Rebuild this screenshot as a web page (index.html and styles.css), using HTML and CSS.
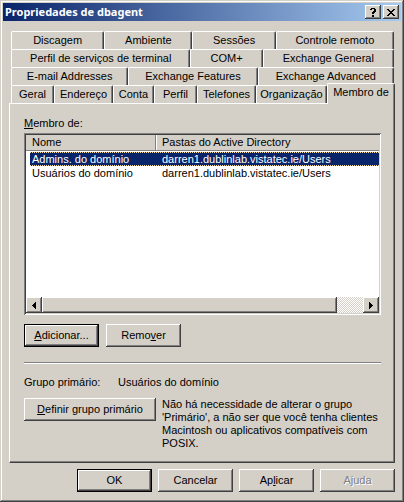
FILE: index.html
```html
<!DOCTYPE html>
<html lang="pt">
  <head>
    <meta charset="UTF-8" />
    <meta name="viewport" content="width=device-width, initial-scale=1.0" />
    <title>Propriedades de dbagent</title>
    <link rel="stylesheet" href="styles.css">
  </head>
  <body>
    <div class="window">
      <div class="title-bar">
        <h1>Propriedades de dbagent</h1>
        <button type="button" class="title-button" aria-label="Ajuda">
          <svg width="8" height="9" viewBox="0 0 8 9" shape-rendering="crispEdges">
            <path d="M2 0h4v1h1v3h-1v1h-1v1h-2v-2h1v-1h1v-2h-2v1h-2v-1h1zM3 7h2v2h-2z" />
          </svg>
        </button>
        <button type="button" class="title-button close" aria-label="Fechar">
          <svg width="8" height="7" viewBox="0 0 8 7" shape-rendering="crispEdges">
            <path d="M0 0h2v1h1v1h2v-1h1v-1h2v1h-1v1h-1v1h-1v1h1v1h1v1h1v1h-2v-1h-1v-1h-2v1h-1v1h-2v-1h1v-1h1v-1h1v-1h-1v-1h-1v-1h-1z" />
          </svg>
        </button>
      </div>

      <div class="tabs" role="tablist">
        <div class="tab-row row-1">
          <button type="button" role="tab">Discagem</button>
          <button type="button" role="tab">Ambiente</button>
          <button type="button" role="tab">Sessões</button>
          <button type="button" role="tab">Controle remoto</button>
        </div>
        <div class="tab-row row-2">
          <button type="button" role="tab">Perfil de serviços de terminal</button>
          <button type="button" role="tab">COM+</button>
          <button type="button" role="tab">Exchange General</button>
        </div>
        <div class="tab-row row-3">
          <button type="button" role="tab">E-mail Addresses</button>
          <button type="button" role="tab">Exchange Features</button>
          <button type="button" role="tab">Exchange Advanced</button>
        </div>
        <div class="tab-row row-4">
          <button type="button" role="tab">Geral</button>
          <button type="button" role="tab">Endereço</button>
          <button type="button" role="tab">Conta</button>
          <button type="button" role="tab">Perfil</button>
          <button type="button" role="tab">Telefones</button>
          <button type="button" role="tab">Organização</button>
          <button type="button" role="tab" class="active" aria-selected="true">Membro de</button>
        </div>
      </div>

      <div class="panel" role="tabpanel">
        <p class="list-label" id="list-label"><u>M</u>embro de:</p>
        <div class="list-box">
          <table class="list" aria-labelledby="list-label">
            <thead>
              <tr>
                <th class="name">Nome</th>
                <th>Pastas do Active Directory</th>
              </tr>
            </thead>
            <tbody>
              <tr class="selected">
                <td>Admins. do domínio</td>
                <td>darren1.dublinlab.vistatec.ie/Users</td>
              </tr>
              <tr>
                <td>Usuários do domínio</td>
                <td>darren1.dublinlab.vistatec.ie/Users</td>
              </tr>
            </tbody>
          </table>
          <div class="scrollbar">
            <button type="button" class="arrow" aria-label="Rolar para a esquerda">
              <svg width="4" height="7" viewBox="0 0 4 7" shape-rendering="crispEdges">
                <path d="M3 0h1v7h-1v-1h-1v-1h-1v-1h-1v-1h1v-1h1v-1h1z" />
              </svg>
            </button>
            <div class="track"><div class="thumb"></div></div>
            <button type="button" class="arrow" aria-label="Rolar para a direita">
              <svg width="4" height="7" viewBox="0 0 4 7" shape-rendering="crispEdges">
                <path d="M0 0h1v1h1v1h1v1h1v1h-1v1h-1v1h-1v1h-1z" />
              </svg>
            </button>
          </div>
        </div>
        <div class="actions">
          <button type="button" class="btn default"><u>A</u>dicionar...</button>
          <button type="button" class="btn">Remo<u>v</u>er</button>
        </div>
        <hr />
        <dl class="primary-group">
          <dt>Grupo primário:</dt>
          <dd>Usuários do domínio</dd>
        </dl>
        <div class="set-primary">
          <button type="button" class="btn wide"><u>D</u>efinir grupo primário</button>
          <p>Não há necessidade de alterar o grupo<br />'Primário', a não ser que você tenha clientes<br />Macintosh ou aplicativos compatíveis com<br />POSIX.</p>
        </div>
      </div>

      <div class="footer">
        <button type="button" class="btn default">OK</button>
        <button type="button" class="btn">Cancelar</button>
        <button type="button" class="btn">Ap<u>l</u>icar</button>
        <button type="button" class="btn" disabled>Ajuda</button>
      </div>
    </div>
  </body>
</html>
```
FILE: styles.css
```css
* {
  box-sizing: border-box;
}
body {
  margin: 0;
  background: #d4d0c8;
  font: 11px/13px "Liberation Sans", Arial, sans-serif;
  color: #000;
}
button {
  font: inherit;
  color: inherit;
  padding: 0;
  border: 0;
  background: #d4d0c8;
  white-space: nowrap;
}
h1,
p,
dl,
dd {
  margin: 0;
}
svg {
  display: block;
}
.window {
  display: flex;
  flex-direction: column;
  min-height: 100vh;
  padding: 3px;
  box-shadow: inset -1px -1px #404040, inset 1px 1px #d4d0c8,
    inset -2px -2px #808080, inset 2px 2px #fff;
}

/* title bar */
.title-bar {
  display: flex;
  align-items: center;
  gap: 2px;
  height: 18px;
  padding: 0 2px;
  background: linear-gradient(to right, #0a246a, #a6caf0);
}
.title-bar h1 {
  flex: 1;
  font: bold 11px/18px "Noto Sans", sans-serif;
  color: #fff;
}
.title-button,
.btn,
.arrow,
.thumb {
  display: flex;
  align-items: center;
  justify-content: center;
  background: #d4d0c8;
  box-shadow: inset -1px -1px #404040, inset 1px 1px #fff,
    inset -2px -2px #808080;
}
.title-button {
  width: 16px;
  height: 14px;
}

/* tabs */
.tabs {
  padding: 10px 6px 0 8px;
}
.tab-row {
  display: grid;
  height: 18px;
  padding-right: 1px;
}
.row-1 {
  grid-template-columns: 93fr 88fr 83fr 118fr;
}
.row-2 {
  grid-template-columns: 179fr 72fr 131fr;
}
.row-3 {
  grid-template-columns: 117fr 129fr 136fr;
}
.row-4 {
  grid-template-columns: 43fr 59fr 41fr 43fr 59fr 71fr 68fr;
  padding-right: 0;
}
.tab-row button {
  border: 1px solid #fff;
  border-right-color: #404040;
  border-bottom: 0;
  border-radius: 2px 2px 0 0;
  box-shadow: inset -1px 0 #808080;
}
.tab-row .active {
  position: relative;
  margin: -2px 0 -1px;
  padding-bottom: 3px;
}

/* page */
.panel {
  display: flex;
  flex: 1;
  flex-direction: column;
  margin: 0 6px;
  padding: 13px 13px 12px 14px;
  border: 1px solid #fff;
  border-right-color: #404040;
  border-bottom-color: #404040;
  box-shadow: inset -1px -1px #808080;
}
.list-label {
  margin-bottom: 3px;
}
.list-box {
  display: flex;
  flex: 1;
  flex-direction: column;
  justify-content: space-between;
  padding: 2px;
  background: #fff;
  box-shadow: inset 1px 1px #808080, inset -1px -1px #fff,
    inset 2px 2px #404040, inset -2px -2px #d4d0c8;
}
.list {
  width: 100%;
  border-collapse: separate;
  border-spacing: 0;
  table-layout: fixed;
}
.list th {
  height: 16px;
  padding: 0 6px;
  background: #d4d0c8;
  border-bottom: 1px solid #808080;
  font-weight: normal;
  text-align: left;
}
.list .name {
  width: 130px;
  border-right: 1px solid #808080;
}
.list th + th {
  box-shadow: inset 1px 0 #fff;
}
.list tbody::before {
  content: "";
  display: block;
  height: 1px;
}
.list td {
  height: 14px;
  padding: 0 6px;
}
.list td:first-child {
  padding-left: 2px;
  border-left: 4px solid #fff;
}
/* dotted focus line along the top and bottom of the row */
.selected td {
  color: #fff;
  background:
    repeating-linear-gradient(to right, #f5db95 0 1px, #0a246a 1px 2px) 0 0 / 100% 1px no-repeat,
    repeating-linear-gradient(to right, #f5db95 0 1px, #0a246a 1px 2px) 0 100% / 100% 1px no-repeat,
    #0a246a;
}
.scrollbar {
  display: flex;
  height: 16px;
}
.arrow {
  width: 16px;
}
.track {
  flex: 1;
  background: repeating-conic-gradient(#fff 0 25%, #d4d0c8 0 50%) 0 0 / 2px 2px;
}
.thumb {
  width: 92%;
  height: 16px;
}
.actions {
  display: flex;
  gap: 7px;
  margin-top: 9px;
}
.btn {
  width: 75px;
  height: 23px;
}
.btn.default {
  border: 1px solid #000;
}
.btn.wide {
  flex: none;
  width: 132px;
}
.btn:disabled {
  color: #808080;
  text-shadow: 1px 1px #fff;
}
hr {
  width: 100%;
  height: 2px;
  margin: 15px 0 12px;
  border: 0;
  border-top: 1px solid #808080;
  border-bottom: 1px solid #fff;
}
.primary-group {
  display: flex;
}
.primary-group dt {
  width: 94px;
}
.set-primary {
  display: flex;
  gap: 6px;
  margin-top: 9px;
}
.footer {
  display: flex;
  justify-content: flex-end;
  gap: 6px;
  padding: 6px 6px 7px;
}
```
